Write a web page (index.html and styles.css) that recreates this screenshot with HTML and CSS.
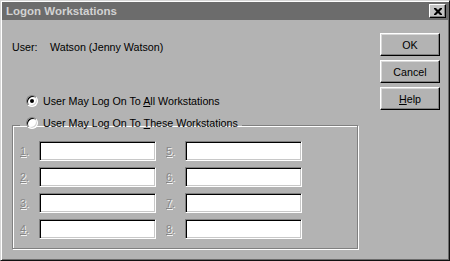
FILE: index.html
```html
<!DOCTYPE html>
<html lang="en">
<head>
    <meta charset="UTF-8">
    <meta name="viewport" content="width=device-width, initial-scale=1.0">
    <title>Logon Workstations</title>
    <link rel="stylesheet" href="styles.css">
</head>
<body>
    <div class="window">
        <div class="titlebar">
            <span class="title">Logon Workstations</span>
            <button class="close-btn" aria-label="Close">
                <svg width="8" height="7" viewBox="0 0 8 7">
                    <path d="M0 0h2l2 2 2-2h2v1l-2.5 2.5 2.5 2.5v1h-2l-2-2-2 2h-2v-1l2.5-2.5-2.5-2.5z" fill="#000"/>
                </svg>
            </button>
        </div>
        <div class="content">
            <div class="main">
                <div class="user-row">
                    <span class="user-label">User:</span>
                    <span>Watson (Jenny Watson)</span>
                </div>
                <label class="radio-row">
                    <span class="radio checked"></span>
                    <span>User May Log On To <u>A</u>ll Workstations</span>
                </label>
                <fieldset class="group">
                    <legend class="radio-row">
                        <span class="radio"></span>
                        <span>User May Log On To <u>T</u>hese Workstations</span>
                    </legend>
                    <div class="fields">
                        <div class="field-col">
                            <span class="num"><u>1</u>.</span><span class="field"></span>
                            <span class="num"><u>2</u>.</span><span class="field"></span>
                            <span class="num"><u>3</u>.</span><span class="field"></span>
                            <span class="num"><u>4</u>.</span><span class="field"></span>
                        </div>
                        <div class="field-col">
                            <span class="num"><u>5</u>.</span><span class="field"></span>
                            <span class="num"><u>6</u>.</span><span class="field"></span>
                            <span class="num"><u>7</u>.</span><span class="field"></span>
                            <span class="num"><u>8</u>.</span><span class="field"></span>
                        </div>
                    </div>
                </fieldset>
            </div>
            <div class="buttons">
                <button class="btn">OK</button>
                <button class="btn">Cancel</button>
                <button class="btn"><u>H</u>elp</button>
            </div>
        </div>
    </div>
</body>
</html>
```

FILE: styles.css
```css
body {
    margin: 0;
    font-family: 'Liberation Sans', Arial, sans-serif;
    font-size: 10.7px;
    line-height: 14px;
    color: #000;
    background: #b3b3b3;
}
.window {
    box-sizing: border-box;
    width: 450px;
    height: 261px;
    padding: 1px;
    background: #b3b3b3;
    border: 1px solid;
    border-color: #d6d6d6 #111 #111 #d6d6d6;
    box-shadow: inset 1px 1px #fff, inset -1px -1px #6c6c6c;
    display: flex;
    flex-direction: column;
}
.titlebar {
    height: 18px;
    background: #6c6c6c;
    display: flex;
    align-items: center;
    justify-content: space-between;
    padding-left: 4px;
}
.title {
    color: #d2d2d2;
    font-weight: bold;
    font-size: 11.5px;
}
.close-btn {
    width: 17px;
    height: 14px;
    margin-right: 2px;
    padding: 0;
    background: #c4c4c4;
    border: 1px solid;
    border-color: #fff #000 #000 #fff;
    box-shadow: inset -1px -1px #808080;
    display: flex;
    align-items: center;
    justify-content: center;
}
.content {
    flex-grow: 1;
    display: flex;
    align-items: flex-start;
}
.main {
    padding-left: 10px;
    padding-top: 20px;
}
.user-row {
    display: flex;
}
.user-label {
    width: 38px;
}
.radio-row {
    display: flex;
    align-items: center;
    gap: 5px;
}
.main > .radio-row {
    margin-top: 40px;
    margin-left: 14px;
}
.radio {
    box-sizing: border-box;
    width: 12px;
    height: 12px;
    border-radius: 50%;
    border: 1px solid;
    border-color: #808080 #fff #fff #808080;
    box-shadow: inset 1px 1px #000, inset -1px -1px #d4d4d4;
    background: #fff;
    display: flex;
    align-items: center;
    justify-content: center;
}
.radio.checked::after {
    content: '';
    width: 4px;
    height: 4px;
    border-radius: 50%;
    background: #000;
}
.group {
    box-sizing: border-box;
    width: 346px;
    margin: 8px 0 0 0;
    padding: 7px 0 9px 7px;
    border: 1px solid #808080;
    box-shadow: inset 1px 1px #fff, 1px 1px #fff;
}
.group legend {
    padding: 0 4px 4px 6px;
    align-items: flex-start;
}
.group legend .radio {
    margin-top: 1px;
}
.fields {
    display: flex;
    gap: 10px;
}
.field-col {
    display: grid;
    grid-template-columns: 19px 117px;
    grid-auto-rows: 20px;
    row-gap: 6px;
    align-items: center;
}
.num {
    color: #868686;
    text-shadow: 1px 1px #f4f4f4;
}
.field {
    box-sizing: border-box;
    height: 20px;
    background: #fff;
    border: 1px solid;
    border-color: #808080 #fff #fff #808080;
    box-shadow: inset 1px 1px #000, inset -1px -1px #c8c8c8;
}
.buttons {
    margin-left: auto;
    margin-right: 8px;
    padding-top: 13px;
    display: flex;
    flex-direction: column;
    gap: 4px;
}
.btn {
    width: 60px;
    height: 23px;
    padding: 0;
    font-family: inherit;
    font-size: 10.7px;
    color: #000;
    background: #b3b3b3;
    border: 1px solid;
    border-color: #fff #000 #000 #fff;
    box-shadow: inset -1px -1px #808080, inset 1px 1px #d8d8d8;
}
```
